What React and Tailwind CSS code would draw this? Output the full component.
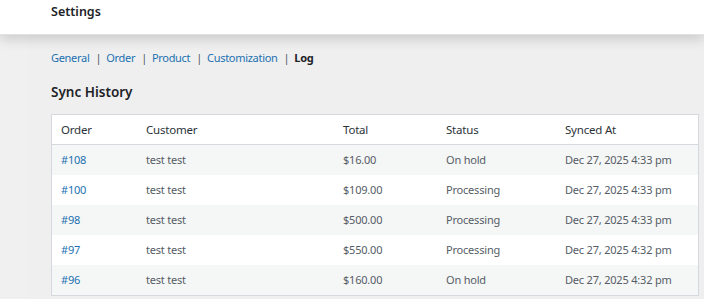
const rows = [
  { id: "#108", customer: "test test", total: "$16.00", status: "On hold", at: "Dec 27, 2025 4:33 pm" },
  { id: "#100", customer: "test test", total: "$109.00", status: "Processing", at: "Dec 27, 2025 4:33 pm" },
  { id: "#98", customer: "test test", total: "$500.00", status: "Processing", at: "Dec 27, 2025 4:33 pm" },
  { id: "#97", customer: "test test", total: "$550.00", status: "Processing", at: "Dec 27, 2025 4:32 pm" },
  { id: "#96", customer: "test test", total: "$160.00", status: "On hold", at: "Dec 27, 2025 4:32 pm" },
];

const tabs = ["General", "Order", "Product", "Customization"];

export default function App() {
  return (
    <div
      className="flex h-[299px] w-[704px] flex-col overflow-hidden bg-[#f0f0f1] text-[#3c434a]"
      style={{ fontFamily: '"Noto Sans", "Open Sans", sans-serif' }}
    >
      <header className="relative z-10 flex h-[35px] shrink-0 items-center border-b border-[#e2e2e2] bg-white px-[51px] shadow-[0_5px_12px_rgba(0,0,0,0.14)]">
        <h1 className="-mt-[10px] text-[12.5px] font-semibold text-[#1d2327]">Settings</h1>
      </header>

      <div className="flex min-h-0 flex-1">
        <aside className="w-[28px] shrink-0 bg-[#f0f0f0]" />
        <main className="flex-1 bg-[#efefef] pl-[23px] pr-[5px] pt-[15px]">
          <nav className="flex items-center text-[11px] leading-[16px] tracking-[-0.3px]">
            {tabs.map((t) => (
              <span key={t} className="flex items-center">
                <a className="text-[#2271b1]">{t}</a>
                <span className="ml-[6px] mr-[5px] text-[#50575e]">|</span>
              </span>
            ))}
            <span className="font-bold text-[#1d2327]">Log</span>
          </nav>

          <h2 className="mt-[16px] text-[13.5px] font-semibold leading-[20px] text-[#1d2327]">Sync History</h2>

          <div className="mt-[12px] border border-[#d5d8dc] bg-white text-[11px] tracking-[-0.2px]">
            <div className="grid h-[30px] grid-cols-[85px_197px_103px_119px_1fr] items-center border-b border-[#d5d8dc] pl-[9px] text-[11.5px] text-[#2c3338]">
              <span>Order</span>
              <span>Customer</span>
              <span>Total</span>
              <span>Status</span>
              <span>Synced At</span>
            </div>
            {rows.map((r, i) => (
              <div
                key={r.id}
                className={`grid h-[30px] grid-cols-[85px_197px_103px_119px_1fr] items-center pl-[9px] text-[#555d66] ${
                  i % 2 === 0 ? "bg-[#f5f6f6]" : "bg-white"
                }`}
              >
                <a className="text-[#2271b1]">{r.id}</a>
                <span>{r.customer}</span>
                <span>{r.total}</span>
                <span>{r.status}</span>
                <span>{r.at}</span>
              </div>
            ))}
          </div>
        </main>
      </div>
    </div>
  );
}
